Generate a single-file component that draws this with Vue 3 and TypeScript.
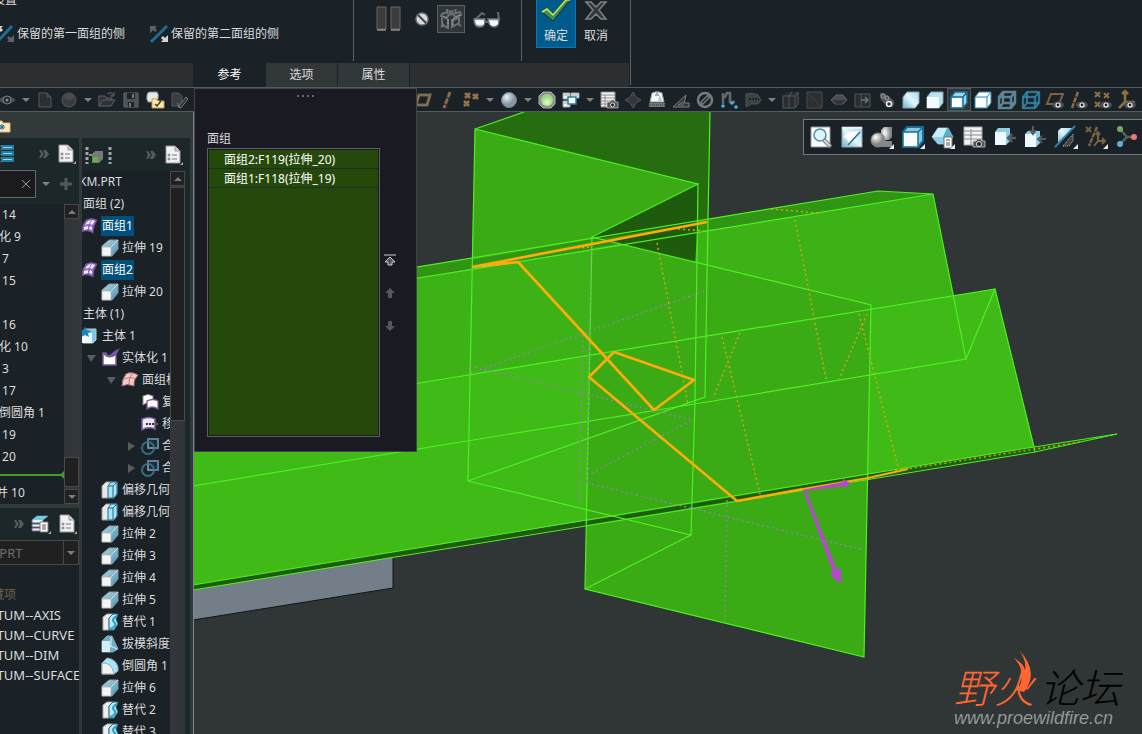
<script setup lang="ts">
import { ref } from 'vue'

interface Tool { icon: string; label: string; caret?: boolean; on?: boolean }
interface Node { text: string; icon?: string; level?: number; caret?: 'open' | 'shut'; picked?: boolean; root?: boolean }

const cubeEdge = 'M2 7 6 2H18V13L14 18H2ZM2 7H14V18M14 7 18 2'
const eyeBadge = '<ellipse cx="13" cy="15" rx="6" ry="3.5" fill="#4b5154"/><circle cx="13" cy="15" r="2" fill="#222" stroke="#eee" stroke-width="1.2"/>'
const corner = '<path d="M24 19v5h-5z" fill="#e8e8e8"/>'

const icons: Record<string, string> = {
  eye: '<path d="M1 10Q10 2 19 10Q10 18 1 10Z" fill="#4a5053"/><circle cx="10" cy="10" r="4" fill="#252b2f" stroke="#7b8082"/><circle cx="10" cy="10" r="1.5" fill="#888"/>',
  file: '<path d="M4 3H12L16 7V17H4Z" fill="#2b2f31" stroke="#54585a"/><path d="M12 3V7H16" fill="none" stroke="#54585a"/>',
  ball: '<circle cx="10" cy="10" r="7" fill="#3a3d3f" stroke="#56595b"/><ellipse cx="10" cy="7" rx="5" ry="3" fill="#484c4e"/>',
  open: '<path d="M2 16V6H8L9 8H15V10M2 16 6 10H18L14 16ZM10 4Q14 1 16 5M17 2V6H13" fill="#2d3134" stroke="#5e6264"/>',
  save: '<path d="M3 3H17V17H3Z" fill="#4e5254" stroke="#66696b"/><path d="M6 3H14V9H6ZM7 12H13V17H7Z" fill="#1d2327"/><path d="M11 4H13V8H11ZM8 13H10V17H8Z" fill="#777"/>',
  pack: '<path d="M2 5Q2 2 5 2H12Q14 4 13 9L10 12H3Q1 9 2 5Z" fill="#e5e7e8" stroke="#888"/><path d="M7 9H12L13 11H19V18H7Z" fill="#ffe8b0" stroke="#c49a46"/><path d="M10 14 12 16 16 11" fill="none" stroke="#333" stroke-width="1.3"/>',
  edit: '<path d="M3 3H10L13 6V16H3Z" fill="#3a3e40" stroke="#505456"/><path d="M9 17 17 7 19 9 12 18ZM8 13 11 17" fill="#333" stroke="#74787a"/>',
  plane: '<path d="M6 5H17L14 15H3Z" fill="none" stroke="#6d6252" stroke-width="3"/><path d="M6 5H17L14 15H3Z" fill="none" stroke="#9a7a45"/>',
  axis: '<path d="M13 2 7 18" stroke="#5c5040" stroke-width="3.500" stroke-dasharray="6 1"/><path d="M13 2 7 18" stroke="#a27d42" stroke-width="1.500" stroke-dasharray="5 2"/>',
  points: '<path d="M4 3 9 8M9 3 4 8M12 4 17 9M17 4 12 9M3 11 8 16M8 11 3 16" stroke="#937349" stroke-width="2.500"/>',
  sphere: '<circle cx="10" cy="10" r="7.5" fill="url(#ball)" stroke="#77818c"/>',
  globe: '<path d="M6 2H14L18 6V14L14 18H6L2 14V6Z" fill="#8b918b" stroke="#a8ada8"/><circle cx="10" cy="10" r="6" fill="url(#lime)"/>',
  windows: '<path d="M2 3H9V9H2ZM10 3H18V8H10ZM2 11H9V17H2Z" fill="#f2f2f2" stroke="#9da1a3"/><path d="M7 7H15V14H7Z" fill="#fff" stroke="#2180a7" stroke-width="1.5"/><path d="M3 5H8M11 5H17M3 13H6" stroke="#9ab"/>',
  camera: '<path d="M2 2H16V17H2Z" fill="#f4f4f4" stroke="#888"/><path d="M2 5H16M2 8H16M2 11H16M2 14H16M6 5V17" stroke="#8a8a8a"/><path d="M8 12H11L12 10H15L16 12H19V18H8Z" fill="#555" stroke="#ddd" stroke-width=".6"/><circle cx="13.500" cy="15" r="2" fill="#222" stroke="#ddd"/>',
  gem: '<path d="M10 2 13 7 18 10 13 13 10 18 7 13 2 10 7 7Z" fill="#3c3e40" stroke="#515456"/><circle cx="10" cy="10" r="4" fill="#343739"/>',
  helmet: '<path d="M5 3Q10 0 15 3L17 12H3Z" fill="#f3f7f8" stroke="#8f9b9f"/><path d="M10 1V4M8 5H12" stroke="#667"/><path d="M13 5 15 11H11Z" fill="#a9cdd8"/><path d="M2 13H18V17H2Z" fill="#777"/><path d="M3 15H18" stroke="#333" stroke-dasharray="1 1"/>',
  angle: '<path d="M2 17H18V13H13L15 5Z" fill="#34383b" stroke="#7b7f81"/><path d="M7 15H12V12Z" fill="#1a2228" stroke="#777"/>',
  bolt: '<circle cx="10" cy="10" r="7" fill="none" stroke="#777b7d" stroke-width="2.500"/><path d="M6 14 14 6" stroke="#777b7d" stroke-width="4"/><path d="M7 13 13 7" stroke="#22282c" stroke-width="1.500"/>',
  chain: '<path d="M4 14V3M3 7H6L8 3H11V12H16" fill="none" stroke="#65696b" stroke-width="2.500"/><circle cx="4" cy="16" r="1.800" fill="#39b9ec"/><circle cx="13" cy="13" r="1.800" fill="#39b9ec"/><circle cx="17" cy="17" r="1.800" fill="#39b9ec"/>',
  label: '<path d="M3 4Q10 2 15 5L18 10 15 14H8L3 17Z" fill="#3d4143" stroke="#505456"/><path d="M6 9H16" stroke="#222" stroke-width="2" stroke-dasharray="2 1"/>',
  box: '<path d="M2 6 6 2H18V14L14 18H2Z" fill="#292d2f"/><path d="M2 6H8V18H2ZM8 6 11 2M8 18H14V6H8M14 6 17 2V14L14 18" fill="none" stroke="#54585a"/>',
  square: '<path d="M2 2H17V18H2Z" fill="#2c2e2f" stroke="#464a4c"/><path d="M2 2 17 18" stroke="#444"/>',
  disk: '<path d="M2 10 7 5H14L18 10 14 14H6Z" fill="#4a4e50" stroke="#606466"/><path d="M3 10H17L13 14H7Z" fill="#323638"/>',
  export: '<path d="M2 4H17V17H2ZM8 4V17" fill="#292d30" stroke="#505456"/><path d="M8 10H14M12 7 15 10 12 13" fill="none" stroke="#707476" stroke-width="1.500"/>',
  link: '<path d="M3 6Q2 2 7 3L16 10Q19 14 15 17Q12 18 9 15L4 10Z" fill="#54585a"/><circle cx="6" cy="6" r="2" fill="none" stroke="#999"/><circle cx="12" cy="14" r="2.500" fill="#333" stroke="#eee" stroke-width="1.500"/><circle cx="10" cy="8" r="2" fill="none" stroke="#999"/>',
  cubeSoft: '<path d="M2 7 6 2H18V13L14 18H2Z" fill="url(#ice)" stroke="#88a0aa"/>',
  cubeWhite: '<path d="M2 7 6 2H18V13L14 18H2Z" fill="#b7e3f2" stroke="#8aa1ab"/><path d="M2 7H14V18H2Z" fill="#f4fbfd"/>',
  cubeEdges: `<path d="${cubeEdge}" fill="#9bd8ee" stroke="#176d93" stroke-width="1.500"/><path d="M3 8H13V17H3Z" fill="#fff"/>`,
  cubeLine: `<path d="${cubeEdge}" fill="#fff" stroke="#2787ad"/>`,
  wire: `<path d="${cubeEdge}M6 2V13H18M2 18 6 13" fill="none" stroke="#6d7d85" stroke-width="2.500"/><path d="${cubeEdge}" fill="none" stroke="#3b93b5"/>`,
  wireBlue: `<path d="${cubeEdge}M6 2V13H18M2 18 6 13" fill="none" stroke="#1f5873" stroke-width="2.500"/><path d="${cubeEdge}M6 2V13H18M2 18 6 13" fill="none" stroke="#4ba1c2" stroke-width=".8"/>`,
  planeEye: '<path d="M6 4H18L14 14H2Z" fill="none" stroke="#7a6342" stroke-width="2"/>' + eyeBadge,
  axisEye: '<path d="M9 2 3 18" stroke="#8e7043" stroke-width="2.500" stroke-dasharray="5 1"/>' + eyeBadge,
  pointsEye: '<path d="M2 2 7 7M7 2 2 7M11 3 16 8M16 3 11 8M2 12 7 17M7 12 2 17" stroke="#8e7043" stroke-width="2"/>' + eyeBadge,
  csysEye: '<path d="M8 12V2M5 4 8 1 11 4M8 12H18M8 12 2 18" fill="none" stroke="#8e7043" stroke-width="2.500"/>' + eyeBadge,
}

const views: { label: string; art: string }[] = [
  { label: '重新调整', art: '<path d="M2 2H21V22H2Z" fill="#fff" stroke="#8d969a"/><path d="M15 15 22 22" stroke="#777" stroke-width="4"/><path d="M15 15 21 21" stroke="#ddd" stroke-width="2"/><circle cx="11" cy="10" r="6" fill="#dff4fb" stroke="#4a8eaa" stroke-width="1.500"/>' },
  { label: '重画', art: '<path d="M2 2H22V22H2Z" fill="url(#ice)" stroke="#9aa3a6"/><path d="M2 2H22V4H2Z" fill="#eee"/><path d="M3 12Q11 5 21 7L9 20Q8 13 3 12" fill="#fff"/><path d="M8 20 20 7" stroke="#246d8b" stroke-width="1.500"/>' },
  { label: '渲染', art: '<path d="M11 5 14 2H22V12L19 15H11ZM11 16H22V22H11Z" fill="url(#grey)"/><circle cx="8" cy="15" r="7" fill="url(#grey)" stroke="#888"/>' + corner },
  { label: '显示样式', art: '<path d="M2 7 6 2H22V16L17 22H2Z" fill="#83cae4" stroke="#176d93" stroke-width="2"/><path d="M2 7H17V22H2Z" fill="#f7fdff" stroke="#176d93" stroke-width="1.500"/><path d="M17 7 22 2" stroke="#176d93" stroke-width="1.500"/>' + corner },
  { label: '已保存方向', art: '<path d="M1 12 7 3H17L22 12 17 19H7Z" fill="#55aeca" stroke="#8cabb5"/><path d="M1 12 7 3H16L12 12Z" fill="#c8eefa"/><path d="M1 12H12L16 19H7Z" fill="#8fd2e8"/><path d="M13 12H21V23H13Z" fill="#fff" stroke="#777"/><path d="M15 15H19M15 18H19M15 20H19" stroke="#555"/>' + corner },
  { label: '视图管理器', art: '<path d="M2 2H20V20H2Z" fill="#f2f2f2" stroke="#aaa"/><path d="M2 6H20M2 10H20M2 14H20M9 4V20" stroke="#8a8a8a"/><path d="M11 16H14L15 14H19L20 16H23V22H11Z" fill="#555" stroke="#ccc" stroke-width=".8"/><circle cx="17" cy="19" r="2.500" fill="#222" stroke="#ddd"/>' },
  { label: '侧视图', art: '<path d="M2 7 5 3H17V16L13 20H2Z" fill="#8ed0e8"/><path d="M2 7H13V20H2Z" fill="#eefaff"/><path d="M23 13H17M19 9 15 13 19 17" fill="none" stroke="#555b5e" stroke-width="2.500"/>' },
  { label: '前视图', art: '<path d="M2 9 5 6H17V18L13 22H2Z" fill="#8ed0e8"/><path d="M2 9H13V22H2Z" fill="#eefaff"/><path d="M10 1V8M7 5 10 9 13 5M23 14H17M19 11 15 14 19 18" fill="none" stroke="#555b5e" stroke-width="2"/>' },
  { label: '透视图', art: '<path d="M4 6 7 3H19L4 19Z" fill="url(#ice)"/><path d="M9 21 19 9V16L15 21Z" fill="#444" stroke="#bbb" stroke-dasharray="1 1"/><path d="M1 22 21 1" stroke="#2c81a4" stroke-width="2"/>' + corner },
  { label: '基准显示', art: '<path d="M2 2 7 7M7 2 2 7" stroke="#7a6342" stroke-width="2"/><path d="M13 2 5 21" stroke="#7a6342" stroke-width="2.500" stroke-dasharray="5 1"/><path d="M14 16V8M14 16H21M14 16 10 21M12 10 14 7 16 10M18 13 21 16 18 19" fill="none" stroke="#7a6342" stroke-width="2"/>' + corner },
  { label: '注释显示', art: '<path d="M5 4 12 12H20M12 12 5 19" fill="none" stroke="#555d60" stroke-width="2.500"/><circle cx="5" cy="4" r="3" fill="#6fae62"/><circle cx="19" cy="12" r="3" fill="#ee776f"/><circle cx="5" cy="19" r="3" fill="#62afd2"/>' },
]

const nodeIcons: Record<string, string> = {
  quilt: '<path d="M5 3Q10 0 16 3Q12 9 12 16Q6 12 1 15Q1 8 5 3Z" fill="#8f6db8" stroke="#6b4b93"/><path d="M6 5Q8 3 10 3L8 7Q6 7 4 8ZM11 3 14 4 11 8 9 7ZM3 10 7 9 7 12 3 13ZM9 9 11 10 11 13 8 12Z" fill="#f3ecfb"/>',
  pull: '<path d="M1 7 8 1H17V10L11 17H1Z" fill="url(#sea)" stroke="#89979c"/><path d="M1 8H10V17H1Z" fill="#f4f4f4" stroke="#aaa" stroke-width=".6"/><path d="M10 8 17 1" stroke="#ddd"/>',
  body: '<path d="M2 5 5 2H15V13L12 16H2Z" fill="#75c9e9" stroke="#bfc9cc"/><path d="M1 6H11V16H1Z" fill="#f2fbff"/><path d="M4 0 6 3 10 4 7 6 8 10 4 8 0 10 1 6-2 4 2 3Z" fill="#1688bd"/>',
  solid: '<path d="M2 4H5Q7 9 11 5Q13 3 17 1L15 5V16H2Z" fill="#fff" stroke="#76599b" stroke-width="1.500"/><path d="M2 4H5Q7 9 11 5L17 1 15 6Q9 11 3 6Z" fill="#76599b"/>',
  pink: '<path d="M5 3Q10 0 17 4Q12 9 13 15Q6 12 1 15Q1 8 5 3Z" fill="#f1c9c8" stroke="#9d6d6b"/><path d="M11 3Q7 8 8 13M3 8Q10 5 14 8" fill="none" stroke="#b77d7c"/>',
  copy: '<path d="M2 3Q7 0 12 3V11Q7 8 2 12Z" fill="#fff" stroke="#888"/><path d="M6 8Q12 5 17 8V16Q11 12 6 16Z" fill="#fff" stroke="#76599b" stroke-width="1.300"/>',
  move: '<path d="M1 4Q8 1 14 4V14Q7 11 1 15Z" fill="#eee5f6" stroke="#76599b" stroke-width="1.500"/><path d="M5 9H15" stroke="#333" stroke-width="2" stroke-dasharray="2 1"/><path d="M14 6 18 9 14 12Z" fill="#555"/>',
  merge: '<path d="M7 2H17V11H7Z" fill="#1d303a" stroke="#5a8093" stroke-width="2"/><circle cx="7" cy="11" r="6" fill="none" stroke="#376a82" stroke-width="2"/><path d="M7 5V11H13" fill="none" stroke="#7e929b"/>',
  offset: '<path d="M1 5 5 1H16V13L13 17H1Z" fill="#e9e9e9" stroke="#999"/><path d="M7 5 10 1H16V13L13 17H7Z" fill="#a6e4fa" stroke="#1e6885"/><path d="M7 5H12V17M12 5 16 1" fill="none" stroke="#1e6885"/>',
  swap: '<path d="M2 4 6 1H12L8 5V17H2Z" fill="#eee" stroke="#aaa"/><path d="M8 5 12 1H17L15 6 17 11 13 17H8Z" fill="#b6ebfa" stroke="#226782"/><path d="M16 3Q10 6 13 9Q17 13 9 16" fill="none" stroke="#329dc4" stroke-width="2"/>',
  draft: '<path d="M1 6 6 1H11L17 14 12 17H1Z" fill="#6caecb" stroke="#8aa"/><path d="M1 6H9V17H1Z" fill="#d4eef6"/><path d="M10 2V11L16 14M10 11 6 16" fill="none" stroke="#dff5fb"/>',
  round: '<path d="M1 6 6 1Q15 2 17 10V14L13 17H1Z" fill="#a4e5fb" stroke="#99a4a8"/><path d="M1 6Q11 5 13 17H1Z" fill="#f3f3f3" stroke="#9aa"/>',
}

const leftTools: Tool[] = [
  { icon: 'eye', label: '显示', caret: true }, { icon: 'file', label: '新建' }, { icon: 'ball', label: '模型', caret: true },
  { icon: 'open', label: '打开' }, { icon: 'save', label: '保存' }, { icon: 'pack', label: '备份' }, { icon: 'edit', label: '编辑' },
]
const rightTools: Tool[] = [
  { icon: 'plane', label: '平面' }, { icon: 'axis', label: '轴' }, { icon: 'points', label: '点', caret: true },
  { icon: 'sphere', label: '外观', caret: true }, { icon: 'globe', label: '场景' }, { icon: 'windows', label: '窗口', caret: true },
  { icon: 'camera', label: '视图管理' }, { icon: 'gem', label: '旋转中心' }, { icon: 'helmet', label: '测量' }, { icon: 'angle', label: '角度' },
  { icon: 'bolt', label: '直径' }, { icon: 'chain', label: '路径' }, { icon: 'label', label: '注释', caret: true }, { icon: 'box', label: '零件' },
  { icon: 'square', label: '截面' }, { icon: 'disk', label: '盘' }, { icon: 'export', label: '导出' }, { icon: 'link', label: '关联' },
  { icon: 'cubeSoft', label: '带反射着色' }, { icon: 'cubeWhite', label: '着色' }, { icon: 'cubeEdges', label: '带边着色', on: true },
  { icon: 'cubeLine', label: '消隐' }, { icon: 'wire', label: '隐藏线' }, { icon: 'wireBlue', label: '线框' }, { icon: 'planeEye', label: '平面显示' },
  { icon: 'axisEye', label: '轴显示' }, { icon: 'pointsEye', label: '点显示' }, { icon: 'csysEye', label: '坐标系显示' },
]

const features = ['拉伸 14', '实体化 9', '拉伸 7', '拉伸 15', '', '拉伸 16', '实体化 10', '替代 3', '拉伸 17', '完全倒圆角 1', '拉伸 19', '拉伸 20']
const layers = ['DATUM--AXIS', 'DATUM--CURVE', 'DATUM--DIM', 'DATUM--SUFACE']
const model: Node[] = [
  { text: 'XKM.PRT', root: true }, { text: '面组 (2)' },
  { text: '面组1', icon: 'quilt', level: 0, picked: true }, { text: '拉伸 19', icon: 'pull', level: 1 },
  { text: '面组2', icon: 'quilt', level: 0, picked: true }, { text: '拉伸 20', icon: 'pull', level: 1 },
  { text: '主体 (1)' }, { text: '主体 1', icon: 'body', level: 0 },
  { text: '实体化 1', icon: 'solid', level: 1, caret: 'open' }, { text: '面组标识', icon: 'pink', level: 2, caret: 'open' },
  { text: '复制 1', icon: 'copy', level: 3 }, { text: '移动 1', icon: 'move', level: 3 },
  { text: '合并 1', icon: 'merge', level: 3, caret: 'shut' }, { text: '合并 2', icon: 'merge', level: 3, caret: 'shut' },
  { text: '偏移几何 1', icon: 'offset', level: 1 }, { text: '偏移几何 2', icon: 'offset', level: 1 },
  { text: '拉伸 2', icon: 'pull', level: 1 }, { text: '拉伸 3', icon: 'pull', level: 1 }, { text: '拉伸 4', icon: 'pull', level: 1 }, { text: '拉伸 5', icon: 'pull', level: 1 },
  { text: '替代 1', icon: 'swap', level: 1 }, { text: '拔模斜度 1', icon: 'draft', level: 1 }, { text: '倒圆角 1', icon: 'round', level: 1 },
  { text: '拉伸 6', icon: 'pull', level: 1 }, { text: '替代 2', icon: 'swap', level: 1 }, { text: '替代 3', icon: 'swap', level: 1 },
]
const tabs = ['参考', '选项', '属性']
const active = ref('参考')
const quilts = ['面组2:F119(拉伸_20)', '面组1:F118(拉伸_19)']
</script>

<template>
  <div class="app">
    <svg class="defs" aria-hidden="true">
      <defs>
        <linearGradient id="ice" x1="0" y1="1" x2="1" y2="0"><stop offset="0" stop-color="#6fb6cf" /><stop offset=".5" stop-color="#e3f6fc" /><stop offset="1" stop-color="#9fdcf0" /></linearGradient>
        <linearGradient id="sea" x1="0" y1="0" x2="1" y2="1"><stop offset="0" stop-color="#b9d6df" /><stop offset="1" stop-color="#3f94b8" /></linearGradient>
        <radialGradient id="ball" cx=".35" cy=".3"><stop offset="0" stop-color="#e8eef5" /><stop offset="1" stop-color="#8795a5" /></radialGradient>
        <radialGradient id="lime" cx=".5" cy=".7"><stop offset="0" stop-color="#e4ffd0" /><stop offset="1" stop-color="#9bd67c" /></radialGradient>
        <radialGradient id="grey" cx=".35" cy=".3"><stop offset="0" stop-color="#fff" /><stop offset="1" stop-color="#858585" /></radialGradient>
      </defs>
    </svg>

    <header class="ribbon">
      <section class="group sides">
        <h2>设置</h2>
        <div class="side-row">
          <button class="side">
            <svg width="18" height="18"><path d="M2 16 16 1" stroke="#1c6f94" stroke-width="3" /><path d="M0 1H7L5 3 7 5 5 7 3 5 0 8Z" fill="#d5d5d5" /><path d="M18 17H11L13 15 11 13 13 11 15 13 18 10Z" fill="#606365" /></svg>
            保留的第一面组的侧
          </button>
          <button class="side">
            <svg width="18" height="18"><path d="M1 17 17 1" stroke="#1c6f94" stroke-width="3" /><path d="M0 1H7L5 3 7 5 5 7 3 5 0 8Z" fill="#606365" /><path d="M18 17H11L13 15 11 13 13 11 15 13 18 10Z" fill="#d5d5d5" /></svg>
            保留的第二面组的侧
          </button>
        </div>
      </section>
      <section class="group preview">
        <button class="pause" aria-label="暂停"><svg width="26" height="28"><path d="M1 2H10V24H1ZM15 2H24V24H15Z" fill="#3a3c3e" stroke="#646667" /><path d="M1 25H10M15 25H24" stroke="#bbb" /></svg></button>
        <button aria-label="无预览"><svg width="16" height="28"><circle cx="8" cy="14" r="6" fill="#d8dadb" stroke="#777a7c" stroke-width="1.5" /><path d="M4 10 12 18" stroke="#444" stroke-width="2" /></svg></button>
        <button class="toggled" aria-label="分离预览"><svg width="26" height="26"><path d="M4 8 9 6 11 9 8 12 3 10ZM4 12V19L10 22V13M11 4 13 8 15 4M15 8 22 6 23 9 17 11ZM14 13V21L21 17V12L14 14M9 3V6M18 3 17 6M3 21 6 18M23 20 20 18" fill="none" stroke="#6d7173" stroke-width="2" /><path d="M5 10 10 13V20M22 9 15 13V20" fill="none" stroke="#a4a7a8" stroke-dasharray="2 1" /></svg></button>
        <button aria-label="预览"><svg width="30" height="28"><path d="M3 15 10 8 13 10M27 15 26 7M13 17H17" fill="none" stroke="#66696b" stroke-width="2" /><path d="M2 14H13Q13 22 8 22Q2 22 2 14ZM16 14H27Q27 22 22 22Q17 22 16 14Z" fill="url(#ice)" stroke="#737779" stroke-width="1.500" /><path d="M4 18H12M18 18H26" stroke="#fff" stroke-width="3" /></svg></button>
      </section>
      <section class="group verdict">
        <button class="accept"><svg width="34" height="26"><path d="M3 12 8 9 14 15 27 0H31L14 21Z" fill="#38915d" stroke="#252525" /><path d="M3 12 8 9 14 15 27 0H31" fill="none" stroke="#e2e63b" stroke-width="1.500" /></svg>确定</button>
        <button class="cancel"><svg width="24" height="26"><path d="M2 2H7L12 7 17 2H22L15 10 22 19H17L12 14 7 19H2L9 10Z" fill="#34383a" stroke="#808384" stroke-width="1.500" /></svg>取消</button>
      </section>
    </header>

    <nav class="tabs">
      <div class="tab-track">
        <button v-for="t in tabs" :key="t" :class="{ active: t === active }" @click="active = t">{{ t }}</button>
      </div>
    </nav>

    <div class="tools">
      <template v-for="(set, s) in [leftTools, rightTools]" :key="s">
        <div class="tool-set">
          <template v-for="t in set" :key="t.icon">
            <button class="tool" :class="{ on: t.on }" :aria-label="t.label"><svg width="20" height="20" v-html="icons[t.icon]" /></button>
            <button v-if="t.caret" class="drop" :aria-label="t.label + '选项'"><svg width="8" height="4"><path d="M0 0H8L4 4Z" /></svg></button>
          </template>
        </div>
      </template>
    </div>

    <main class="work">
      <aside class="dock">
        <div class="dock-head">
          <svg width="12" height="16"><path d="M-4 3H2L3 5H10V14H-4Z" fill="#ffe8ba" stroke="#dcb56b" /><path d="M2 6V12M-1 9H5M0 7 4 11M4 7 0 11" stroke="#176d93" /></svg>
        </div>
        <div class="dock-cols">
          <div class="col-a">
            <div class="bar">
              <svg class="list-icon" width="15" height="20"><path d="M2 2H13V5H2ZM2 8H13V11H2ZM2 14H13V17H2Z" fill="#8ed8f5" stroke="#267d9f" stroke-width="2" /><path d="M0 1V19" stroke="#777" stroke-dasharray="2 2" /></svg>
              <svg class="more" width="11" height="8"><path d="M0 0H2L5 4 2 8H0L2 4ZM4 0H7L10 4 7 8H4L6 4Z" /></svg>
              <button class="sheet" aria-label="设置"><svg width="18" height="20"><path d="M1 1H10L15 6V18H1Z" fill="#f1f1f1" stroke="#999" /><path d="M10 1V6H15" fill="#ccc" stroke="#999" /><path d="M7 10H12M7 14H12" stroke="#777" /><circle cx="4" cy="10" r="1" fill="none" stroke="#777" /><circle cx="4" cy="14" r="1" fill="none" stroke="#777" /><path d="M18 17V20H15Z" fill="#aaa" /></svg></button>
            </div>
            <div class="search">
              <label class="field"><input aria-label="搜索" type="text" /><svg width="10" height="10"><path d="M1 1 9 9M9 1 1 9" stroke="#9a9a9a" /></svg></label>
              <svg class="dark-caret" width="8" height="4"><path d="M0 0H8L4 4Z" /></svg>
              <button aria-label="添加"><svg width="12" height="12"><path d="M6 0V12M0 6H12" stroke="#555a5c" stroke-width="3" /></svg></button>
            </div>
            <div class="pane">
              <div class="pane-list">
                <ul class="feature-list">
                  <li v-for="(f, i) in features" :key="i">{{ f }}</li>
                </ul>
                <svg class="insert" width="64" height="14"><path d="M0 7H64" stroke="#439b2b" stroke-width="2" /><path d="M64 3 60 7 64 11Z" fill="#439b2b" /></svg>
                <ul class="feature-list later"><li>合并 10</li></ul>
              </div>
              <div class="scroll">
                <button aria-label="向上"><svg width="8" height="4"><path d="M0 4H8L4 0Z" /></svg></button>
                <div class="thumb low" />
                <button aria-label="向下"><svg width="8" height="4"><path d="M0 0H8L4 4Z" /></svg></button>
              </div>
            </div>
            <div class="bar lower">
              <svg class="more" width="11" height="8"><path d="M0 0H2L5 4 2 8H0L2 4ZM4 0H7L10 4 7 8H4L6 4Z" /></svg>
              <button class="layer" aria-label="层"><svg width="20" height="20"><path d="M1 6 6 2H17L12 6V9H1ZM1 10H12V13H1ZM1 14H12V17H1Z" fill="#e6f5fa" stroke="#667" /><path d="M1 6 6 2H17L12 6Z" fill="#72cae8" /><path d="M9 8H17V18H9Z" fill="#fff" stroke="#777" /><path d="M11 11H15M11 13H15M11 15H15" stroke="#555" /><path d="M20 17V20H17Z" fill="#aaa" /></svg></button>
              <button class="sheet" aria-label="层设置"><svg width="18" height="20"><path d="M1 1H10L15 6V18H1Z" fill="#f1f1f1" stroke="#999" /><path d="M10 1V6H15" fill="#ccc" stroke="#999" /><path d="M7 10H12M7 14H12" stroke="#777" /><circle cx="4" cy="10" r="1" fill="none" stroke="#777" /><circle cx="4" cy="14" r="1" fill="none" stroke="#777" /><path d="M18 17V20H15Z" fill="#aaa" /></svg></button>
            </div>
            <div class="picker">
              <select aria-label="模型"><option>KM.PRT</option></select>
              <span><svg width="8" height="4"><path d="M0 0H8L4 4Z" /></svg></span>
            </div>
            <ul class="layers">
              <li class="muted">隐藏项</li>
              <li v-for="l in layers" :key="l">{{ l }}</li>
              <li>层-</li>
            </ul>
          </div>
          <div class="col-b">
            <div class="bar">
              <svg class="tree-icon" width="28" height="20"><path d="M2 2V19M25 2V19" stroke="#ddd" stroke-width="3" stroke-dasharray="3 2" opacity=".7" /><path d="M4 10H8" stroke="#888" stroke-width="2" /><path d="M7 9 10 6H18V14L14 18H7Z" fill="#76797a" /><path d="M8 12H13V17H8Z" fill="#5bb83a" /></svg>
              <svg class="more" width="11" height="8"><path d="M0 0H2L5 4 2 8H0L2 4ZM4 0H7L10 4 7 8H4L6 4Z" /></svg>
              <button class="sheet" aria-label="树设置"><svg width="18" height="20"><path d="M1 1H10L15 6V18H1Z" fill="#f1f1f1" stroke="#999" /><path d="M10 1V6H15" fill="#ccc" stroke="#999" /><path d="M7 10H12M7 14H12" stroke="#777" /><circle cx="4" cy="10" r="1" fill="none" stroke="#777" /><circle cx="4" cy="14" r="1" fill="none" stroke="#777" /><path d="M18 17V20H15Z" fill="#aaa" /></svg></button>
            </div>
            <div class="pane">
              <div class="pane-list">
                <ul class="model-tree">
                  <li v-for="(n, i) in model" :key="i" :class="n.icon ? 'lv' + n.level : n.root ? 'root' : 'head'">
                    <template v-if="n.icon">
                      <span class="twist"><svg v-if="n.caret" width="9" height="9"><path :d="n.caret === 'open' ? 'M0 1H9L4 8Z' : 'M1 0 8 4 1 9Z'" /></svg></span>
                      <svg class="glyph" width="18" height="18" v-html="nodeIcons[n.icon]" />
                    </template>
                    <span :class="{ picked: n.picked }">{{ n.text }}</span>
                  </li>
                </ul>
              </div>
              <div class="scroll">
                <button aria-label="向上"><svg width="8" height="4"><path d="M0 4H8L4 0Z" /></svg></button>
                <div class="thumb high" />
              </div>
            </div>
          </div>
        </div>
      </aside>

      <section class="scene">
        <svg class="model" viewBox="193 112 949 622" preserveAspectRatio="xMinYMin slice" role="img" aria-label="三维模型">
          <path d="M193 585 393 553V588L193 620Z" fill="#747e89" /><path d="M393 556V588L193 620" fill="none" stroke="#111517" />
          <!-- plate -->
          <path d="M193 304 878 191 933 194 193 313Z" fill="#309512" />
          <path d="M193 313 933 194 966 359 193 486Z" fill="#3cb216" />
          <path d="M193 420 995 289 1034 447 193 585Z" fill="#40ba17" />
          <!-- walls -->
          <path d="M475 129 524 112H710L708 219 698 221 475 257Z" fill="#256d0e" />
          <path d="M475 129 698 184 592 237V239L472 260Z" fill="#3aaa15" />
          <path d="M472 260 592 240V248L472 269Z" fill="#319713" />
          <path d="M592 237 698 184 695 262Z" fill="#1f5b0c" />
          <path d="M592 237 871 305 864 657 585 589Z" fill="#3aaa15" />
          <path d="M592 240 695 223V230L592 248Z" fill="#2f8c12" />
          <path d="M607 241 698 221 695 262Z" fill="#1f5b0c" />
          <!-- plate thickness -->
          <path d="M193 585 690 504 1034 447 1117 434 1035 452 690 508 193 590Z" fill="#1f5b0c" />
          <g class="edge">
            <path d="M475 129 524 112M710 112 708 220 705 397 468 481 475 129 698 184 592 237 871 305 864 657 585 589 592 237M698 184 695 400 691 535 468 481M691 535 585 589" />
            <path d="M193 304 878 191 933 194 966 359 719 400 467 441 193 486M193 313 450 273 933 194M193 420 450 378 995 289 966 359M995 289 1034 447 1035 452" />
          </g>
          <path class="rim" d="M193 585 690 503 1034 447 1117 434 1035 452 690 509 193 590" />
          <path class="violet-dots" d="M471 373 590 331 708 290M470 366 692 420 588 475M587 483 864 550M591 245 587 485M583 335 579 505M727 500 725 620" />
          <path class="amber-dots" d="M657 243 688 404M795 220 826 379M722 337 761 498M740 333 713 398M859 314 898 467M867 314 839 379M771 209 818 213M678 229 706 231M577 248 592 247M895 471 1080 442" />
          <path d="M472 267 707 222M472 267 518 262 654 410 694 380 614 352 589 377 737 501 803 489" class="amber" />
          <path d="M803 489 868 478 908 469" class="amber slim" />
          <path d="M802 490 843 482V479L850 483 846 488 844 486 805 491ZM803 490 807 493 837 570 841 568 841 584 830 575 833 572Z" fill="#b845d4" />
        </svg>
        <div class="view-tools">
          <button v-for="v in views" :key="v.label" :aria-label="v.label"><svg width="24" height="24" v-html="v.art" /></button>
        </div>
        <div class="brand">
          <div class="brand-name"><span class="fire">野火<svg class="flame" width="22" height="46"><path d="M6 0Q27 22 11 42L4 40Q10 32 8 26Q10 18 1 8Q11 14 12 20Q14 11 6 0Z" fill="#ff6633" /></svg></span><span>论坛</span></div>
          <div class="brand-url">www.proewildfire.cn</div>
        </div>
      </section>
    </main>

    <section class="sheet-panel" aria-label="参考">
      <div class="grip"><i /><i /><i /><i /></div>
      <h3>面组</h3>
      <div class="collector">
        <ul><li v-for="q in quilts" :key="q">{{ q }}</li></ul>
        <div class="order">
          <button aria-label="移到顶部"><svg width="12" height="12"><path d="M0 1H12" stroke="#ccc" /><path d="M6 3 11 8H8V11H4V8H1Z" fill="#555" stroke="#ccc" /></svg></button>
          <button aria-label="上移"><svg width="12" height="12"><path d="M6 1 11 6H8V11H4V6H1Z" fill="#55585b" /></svg></button>
          <button aria-label="下移"><svg width="12" height="12"><path d="M6 11 11 6H8V1H4V6H1Z" fill="#55585b" /></svg></button>
        </div>
      </div>
    </section>
  </div>
</template>

<style>
body { margin: 0; background: #1a2228; }
</style>

<style scoped>
.app { position: relative; display: flex; flex-direction: column; height: 100vh; overflow: hidden; background: #1a2228; color: #dcdcdc; font: 12px/20px "Noto Sans", "Noto Sans CJK SC", sans-serif; }
.app * { box-sizing: border-box; }
.defs { position: absolute; width: 0; height: 0; }
svg { display: block; flex: none; overflow: visible; }
button { display: flex; align-items: center; justify-content: center; padding: 0; border: 0; background: none; color: inherit; font: inherit; }
ul { margin: 0; padding: 0; list-style: none; }
li { white-space: nowrap; }
h2, h3 { margin: 0; font: inherit; }

.ribbon { display: flex; flex: none; height: 63px; }
.group { display: flex; flex: none; height: 61px; border-right: 1px solid #5d6264; }
.sides { width: 354px; flex-direction: column; margin-top: -10px; height: 71px; gap: 14px; overflow: hidden; }
.sides h2 { margin-left: -7px; }
.side-row { display: flex; gap: 25px; margin-left: -4px; }
.side { gap: 3px; white-space: nowrap; }
.preview { width: 168px; padding: 5px 0 0 22px; gap: 7px; align-items: flex-start; }
.preview .pause { margin-right: 5px; }
.preview .toggled { width: 28px; height: 28px; background: #303539; border: 1px solid #5a5f61; }
.verdict { width: 109px; height: 85px; padding-left: 14px; align-items: flex-start; }
.verdict button { flex-direction: column; width: 40px; height: 48px; justify-content: flex-start; }
.verdict .accept { background: #005a8c; border: 1px solid #0878b4; border-top: 0; }

.tabs { flex: none; height: 25px; border-bottom: 1px solid #505c5e; }
.tab-track { display: flex; width: 629px; height: 24px; padding-left: 193px; background: #2b2f31; }
.tabs button { width: 72px; background: #32373a; border-left: 1px solid #1a2228; }
.tabs button.active { background: #1a2228; color: #fff; }
.tabs button:last-child { width: 73px; border-right: 1px solid #1a2228; }

.tools { display: flex; flex: none; height: 24px; gap: 220px; margin-left: -5px; border-bottom: 1px solid #505c5e; }
.tool-set { display: flex; flex: none; align-items: center; }
.tool { width: 24px; height: 23px; }
.tool.on { background: #303539; border: 1px solid #50575a; }
.drop { width: 14px; height: 23px; }
.drop svg, .dark-caret, .picker svg { fill: #7c8183; }

.work { display: flex; flex: 1; min-height: 0; }
.dock { z-index: 1; display: flex; flex-direction: column; flex: none; width: 194px; background: #32393b; border-right: 1px solid #7c878d; overflow: hidden; }
.dock-head { flex: none; height: 26px; padding-top: 6px; }
.dock-cols { display: flex; flex: 1; min-height: 0; gap: 3px; }
.col-a, .col-b { display: flex; flex-direction: column; min-height: 0; overflow: hidden; background: #1b2728; }
.col-a { flex: none; width: 79px; }
.col-b { flex: none; width: 108px; }
.bar { display: flex; flex: none; align-items: center; height: 32px; padding: 0 3px 0 0; }
.more { margin-left: auto; margin-right: 8px; fill: #565b5d; }
.tree-icon { margin-left: 3px; }
.col-b .bar { height: 33px; padding-right: 7px; }
.search { display: flex; flex: none; align-items: center; height: 28px; margin-bottom: 6px; gap: 6px; }
.field { display: flex; align-items: center; width: 36px; height: 28px; padding-right: 4px; background: #1b1b1d; border: 1px solid #5e686a; border-left: 0; }
.field input { flex: 1; width: 10px; min-width: 0; height: 20px; padding: 0; border: 0; outline: 0; background: none; color: inherit; font: inherit; }
.search button { margin-left: 4px; }
.pane { display: flex; flex: none; background: #1a2228; min-height: 0; }
.col-a .pane { height: 304px; border-bottom: 4px solid #32393b; }
.col-b .pane { flex: 1; margin-right: 5px; }
.pane-list { flex: 1; min-width: 0; overflow: hidden; }
.feature-list { margin-left: -25px; }
.feature-list li { height: 22px; line-height: 22px; }
.feature-list.later { margin-left: -16px; }
.scroll { display: flex; flex-direction: column; flex: none; width: 15px; background: #32363a; }
.scroll button { flex: none; height: 15px; background: #202122; border: 1px solid #45494b; }
.scroll button svg { fill: #777b7d; }
.thumb { background: #202021; border: 1px solid #484b4d; }
.thumb.low { height: 30px; margin-top: auto; margin-bottom: 2px; }
.thumb.high { height: 234px; margin-top: 1px; }
.bar.lower .more { margin-left: 14px; margin-right: 6px; }
.layer { margin-right: 8px; }
.picker { display: flex; flex: none; height: 25px; border: 1px solid #44484a; border-left: 0; background: #202021; overflow: hidden; }
.picker select { appearance: none; flex: 1; min-width: 0; margin-left: -24px; padding: 0; border: 0; background: none; color: #6c6f70; font: inherit; font-size: 13px; }
.picker span { display: flex; align-items: center; justify-content: center; width: 15px; border-left: 1px solid #44484a; }
.layers { flex: 1; width: 99px; margin-left: -20px; padding-top: 20px; background: #1a2228; font-size: 13px; }
.layers .muted { color: #6d6249; font-size: 12px; }
.model-tree { margin-left: -17px; }
.model-tree li { display: flex; align-items: center; height: 22px; }
.lv0 { padding-left: 0; }
.lv1 { padding-left: 20px; }
.lv2 { padding-left: 40px; }
.lv3 { padding-left: 60px; }
.head { padding-left: 17px; }
.root { padding-left: 6px; }
.twist { display: flex; flex: none; justify-content: center; width: 12px; margin-right: 4px; fill: #575c5e; }
.glyph { margin-right: 2px; }
.model-tree li span:last-child { padding: 0 1px; }
.model-tree .picked { background: #00507c; color: #fff; }

.scene { position: relative; flex: 1; min-width: 0; margin-left: -1px; background: #303536; overflow: hidden; }
.model { width: 100%; height: 100%; }
.edge, .rim { fill: none; stroke: #4cf321; stroke-width: 1.2; }
.rim { stroke-width: 1; }
.violet-dots, .amber-dots { fill: none; stroke-width: 1.4; stroke-dasharray: 2 3; }
.violet-dots { stroke: #9183a0; }
.amber-dots { stroke: #d9a60f; }
.amber { fill: none; stroke: #ffab0a; stroke-width: 2.6; stroke-linejoin: round; }
.amber.slim { stroke-width: 2; }
.view-tools { position: absolute; top: 7px; right: 0; display: grid; grid-template-columns: repeat(11, 1fr); width: 339px; height: 36px; padding-left: 2px; background: #1a2228; border: 1px solid #72787b; border-right: 0; }
.brand { position: absolute; right: 22px; bottom: 6px; }
.brand-name { display: flex; justify-content: space-between; gap: 6px; color: #000; font: italic 300 40px/44px "Noto Sans CJK SC", sans-serif; white-space: nowrap; }
.fire { position: relative; color: #ff6633; }
.flame { position: absolute; right: -1px; top: -14px; }
.brand-url { color: #93989a; font: italic 18px/20px "Liberation Sans", Arial, sans-serif; }

.sheet-panel { position: absolute; z-index: 2; top: 88px; left: 194px; width: 223px; height: 364px; padding: 6px 12px 0; background: #1a1a23; border: 1px solid #3d4449; }
.grip { display: flex; justify-content: center; gap: 3px; height: 34px; }
.grip i { width: 2px; height: 2px; background: #64676d; }
.collector { display: flex; gap: 4px; }
.sheet-panel h3 { height: 19px; line-height: 20px; }
.collector ul { width: 173px; height: 289px; padding: 1px; border: 1px solid #5c5f60; background: #25490a; background-clip: content-box; }
.collector li { height: 19px; padding-left: 15px; border-bottom: 1px solid #1e2c30; line-height: 19px; color: #fff; }
.order { display: flex; flex-direction: column; gap: 21px; padding-top: 106px; }
</style>
